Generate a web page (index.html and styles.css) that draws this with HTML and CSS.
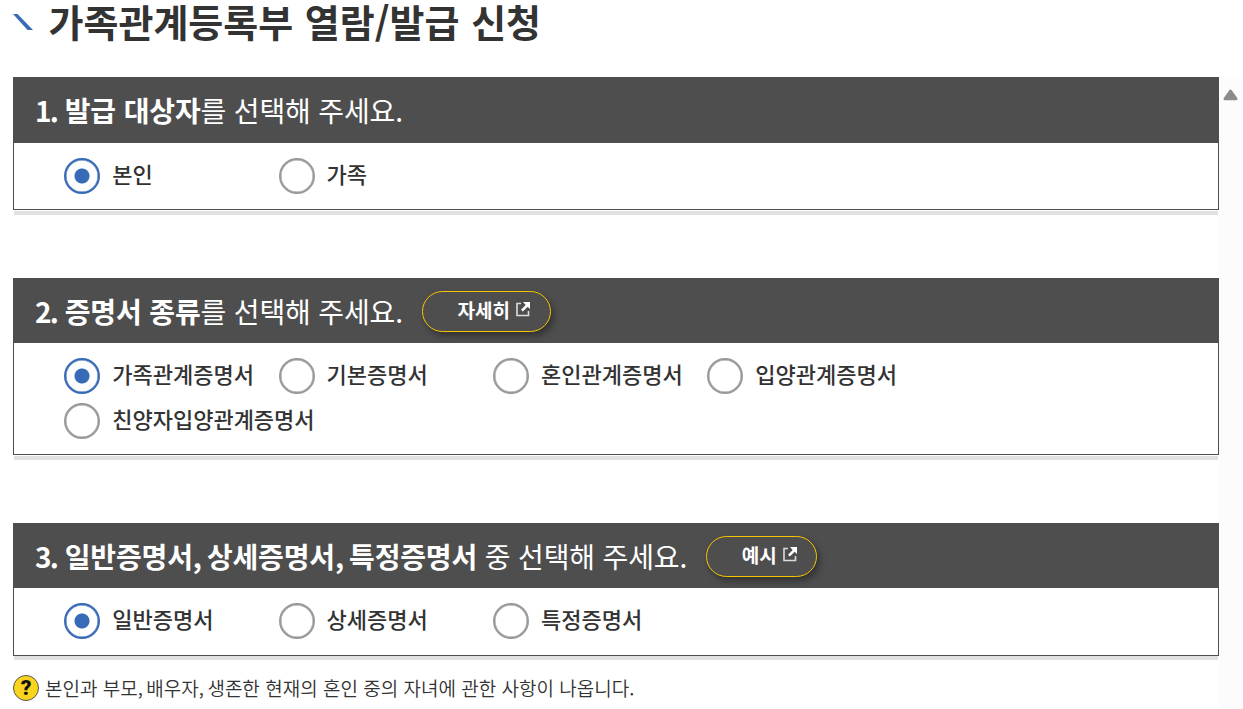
FILE: index.html
```html
<!DOCTYPE html>
<html lang="ko">
<head>
  <meta charset="UTF-8">
  <title>가족관계등록부 열람/발급 신청</title>
  <link rel="stylesheet" href="styles.css">
</head>
<body>

  <h1 class="page-title">
    <svg class="title-mark" width="20" height="16" viewBox="0 0 20 16"><path d="M0 0h4.5L20 16h-5.5z" fill="#386ab8"/></svg>
    <span class="title-text">가족관계등록부 열람/발급 신청</span>
  </h1>

  <div class="wrap">
    <form class="content">

      <!-- 1. 발급 대상자 -->
      <section class="card">
        <h2 class="card-head"><span class="q"><strong><span class="num">1.</span> 발급 대상자</strong>를 선택해 주세요.</span></h2>
        <div class="options">
          <label><input type="radio" name="target" checked><span>본인</span></label>
          <label><input type="radio" name="target"><span>가족</span></label>
        </div>
      </section>

      <!-- 2. 증명서 종류 -->
      <section class="card card-two">
        <h2 class="card-head">
          <span class="q"><strong><span class="num">2.</span> 증명서 종류</strong>를 선택해 주세요.</span>
          <button type="button" class="pill pill-detail">
            <span>자세히</span>
            <svg width="14" height="15" viewBox="0 0 14 15"><path d="M5 1.5H1v12h11.5V9" fill="none" stroke="#ddd" stroke-width="1.6"/><path d="M7 0h7v7l-2.3-2.3-4.9 4.9-1.8-1.8 4.7-4.8z" fill="#fff"/></svg>
          </button>
        </h2>
        <div class="options">
          <label><input type="radio" name="kind" checked><span>가족관계증명서</span></label>
          <label><input type="radio" name="kind"><span>기본증명서</span></label>
          <label><input type="radio" name="kind"><span>혼인관계증명서</span></label>
          <label><input type="radio" name="kind"><span>입양관계증명서</span></label>
          <label><input type="radio" name="kind"><span>친양자입양관계증명서</span></label>
        </div>
      </section>

      <!-- 3. 일반 / 상세 / 특정 -->
      <section class="card card-three">
        <h2 class="card-head">
          <span class="q"><strong><span class="num">3.</span> 일반증명서<span class="comma">,</span> 상세증명서<span class="comma">,</span> 특정증명서</strong> 중 선택해 주세요.</span>
          <button type="button" class="pill pill-sample">
            <span>예시</span>
            <svg width="14" height="15" viewBox="0 0 14 15"><path d="M5 1.5H1v12h11.5V9" fill="none" stroke="#ddd" stroke-width="1.6"/><path d="M7 0h7v7l-2.3-2.3-4.9 4.9-1.8-1.8 4.7-4.8z" fill="#fff"/></svg>
          </button>
        </h2>
        <div class="options">
          <label><input type="radio" name="form" checked><span>일반증명서</span></label>
          <label><input type="radio" name="form"><span>상세증명서</span></label>
          <label><input type="radio" name="form"><span>특정증명서</span></label>
        </div>
      </section>

      <p class="note">
        <span class="help">?</span>
        <span class="note-text">본인과 부모<span class="comma">,</span> 배우자<span class="comma">,</span> 생존한 현재의 혼인 중의 자녀에 관한 사항이 나옵니다.</span>
      </p>
    </form>

    <div class="scrollbar">
      <svg width="15" height="12" viewBox="0 0 15 12"><path d="M7.5 2.2L13 9.8H2z" fill="#8b8b8b" stroke="#8b8b8b" stroke-width="3" stroke-linejoin="round"/></svg>
    </div>
  </div>

</body>
</html>
```
FILE: styles.css
```css
* {
  box-sizing: border-box;
}

body {
  margin: 0;
  background: #fff;
  color: #333;
  font-family: "Noto Sans CJK KR", sans-serif;
}

/* 제목 */
.page-title {
  display: flex;
  align-items: flex-start;
  height: 77px;
  margin: 0;
  padding-left: 13px;
  font-size: 38px;
  line-height: 42px;
  font-weight: 700;
}

.title-mark {
  margin: 14px 15.5px 0 0;
}

.title-text {
  white-space: nowrap;
  word-spacing: 1px;
}

.wrap {
  display: flex;
  height: 632px;
}

.content {
  width: 1219px;
  padding-left: 13px;
}

/* 질문 카드 */
.card {
  position: relative;
  height: 133px;
  margin-bottom: 68px;
  border: 1px solid #4e4e4e;
}

.card::after {
  content: "";
  position: absolute;
  left: 0;
  right: 0;
  bottom: -6px;
  height: 4px;
  background: #e1e1e1;
}

.card-head {
  display: flex;
  align-items: center;
  height: 65px;
  margin: 0;
  padding-left: 21px;
  background: #4e4e4e;
  color: #fff;
  font-size: 28px;
  line-height: 60px;
  font-weight: 400;
  letter-spacing: -0.15px;
}

.card-head strong {
  font-weight: 700;
}

.card-head .num {
  letter-spacing: -1.8px;
}

.card-head .comma {
  display: inline-block;
  width: 6.4px;
}

.q {
  margin-top: -2px;
  white-space: nowrap;
}

.card-two {
  height: 177px;
}

.card-two .card-head,
.card-three .card-head {
  height: 64px;
}

.card-two .q,
.card-three .q {
  margin-top: 0;
}

.card-three {
  margin-bottom: 19px;
}

.card-three::after {
  bottom: -5px;
}

.options {
  display: grid;
  grid-template-columns: repeat(4, 214.4px);
  grid-auto-rows: 45px;
  padding: 15px 0 0 50.2px;
}

.options label {
  display: flex;
  align-items: flex-start;
  white-space: nowrap;
  font-size: 22px;
  line-height: 31px;
  font-weight: 500;
}

.options input {
  appearance: none;
  flex: none;
  width: 36px;
  height: 36px;
  margin: 0 12px 0 0;
  border: 2px solid #999;
  border-radius: 50%;
  background: #fff;
  box-shadow: inset 0 0 0 0.5px #999;
}

.options input:checked {
  border-color: #386ab8;
  background: radial-gradient(circle, #386ab8 7px, #fff 8px);
  box-shadow: inset 0 0 0 0.5px #386ab8;
}

/* 버튼 */
.pill {
  display: flex;
  align-items: flex-start;
  height: 41px;
  margin: 1px 0 0 19.2px;
  padding: 0 0 0 34.5px;
  border: 1px solid #f6c700;
  border-radius: 21px;
  background: #4e4e4e;
  box-shadow: 3px 4px 6px rgba(0, 0, 0, 0.35);
  color: #fff;
  font-family: inherit;
  font-size: 19px;
  line-height: 36px;
  font-weight: 700;
  white-space: nowrap;
}

.pill svg {
  margin: 10px 0 0 6.5px;
}

.pill-detail {
  width: 129px;
}

.pill-sample {
  width: 111px;
}

/* 안내 문구 */
.note {
  display: flex;
  align-items: center;
  height: 26px;
  margin: 0;
  font-size: 19px;
  line-height: 26px;
  font-weight: 350;
}

.note-text {
  white-space: nowrap;
}

.note .comma {
  display: inline-block;
  width: 3.3px;
}

.help {
  width: 26px;
  height: 26px;
  margin-right: 6px;
  border: 1.5px solid #555;
  border-radius: 50%;
  background: #fbd51d;
  color: #111;
  font-family: Roboto, sans-serif;
  font-size: 21px;
  line-height: 24px;
  font-weight: 900;
  text-align: center;
}

/* 스크롤 영역 */
.scrollbar {
  width: 23px;
  padding: 12px 0 0 4px;
  background: #fcfcfc;
}

.scrollbar svg {
  display: block;
}
```
